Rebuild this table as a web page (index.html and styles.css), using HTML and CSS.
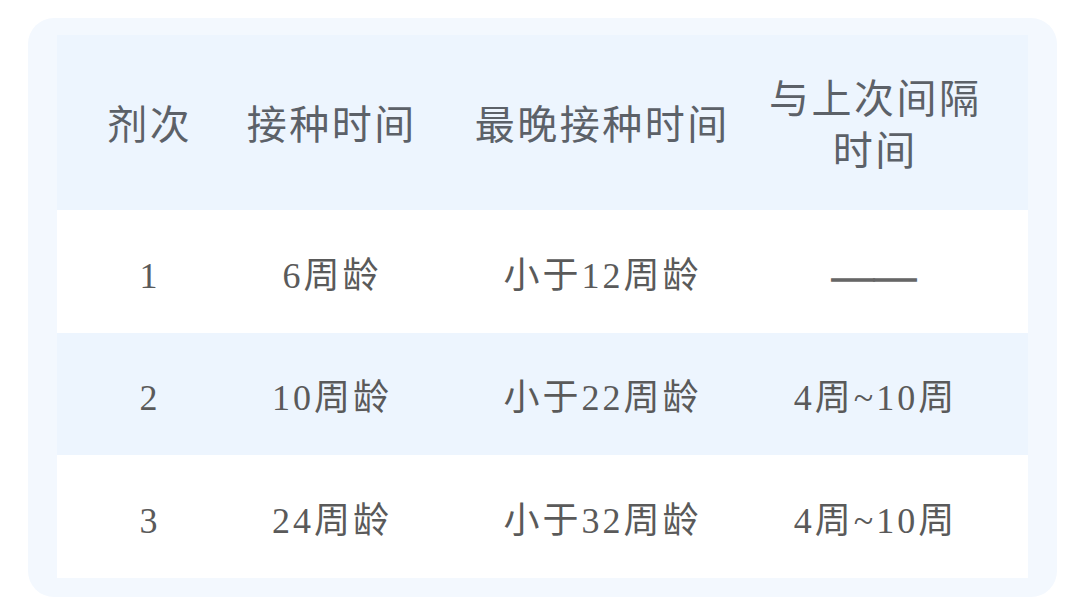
FILE: index.html
```html
<!DOCTYPE html>
<html lang="zh-CN">
<head>
<meta charset="utf-8">
<title>接种时间表</title>
<link rel="stylesheet" href="styles.css">
</head>
<body>
<div class="card">
  <div class="table">
    <div class="row head">
      <div class="cell"><span>剂次</span></div>
      <div class="cell"><span>接种时间</span></div>
      <div class="cell"><span>最晚接种时间</span></div>
      <div class="cell"><span class="two">与上次间隔<br>时间</span></div>
    </div>
    <div class="row white">
      <div class="cell"><span>1</span></div>
      <div class="cell"><span>6周龄</span></div>
      <div class="cell"><span>小于12周龄</span></div>
      <div class="cell"><span class="dash">——</span></div>
    </div>
    <div class="row blue">
      <div class="cell"><span>2</span></div>
      <div class="cell"><span>10周龄</span></div>
      <div class="cell"><span>小于22周龄</span></div>
      <div class="cell"><span>4周~10周</span></div>
    </div>
    <div class="row white">
      <div class="cell"><span>3</span></div>
      <div class="cell"><span>24周龄</span></div>
      <div class="cell"><span>小于32周龄</span></div>
      <div class="cell"><span>4周~10周</span></div>
    </div>
  </div>
</div>
</body>
</html>
```
FILE: styles.css
```css
html, body {
  margin: 0;
  padding: 0;
  background: #ffffff;
}

body {
  padding: 18px 0 0 28px;
  font-family: "Liberation Serif", "Noto Sans CJK SC", serif;
}

.card {
  width: 1029px;
  height: 579px;
  box-sizing: border-box;
  padding: 17px 29px 19px 29px;
  background: #f3f8fe;
  border-radius: 26px;
}

.table {
  display: grid;
  grid-template-rows: 175px 123px 122px 123px;
  background: #edf5fe;
  padding-right: 61px;
}

.row {
  display: grid;
  grid-template-columns: 183px 181px 360px 1fr;
}

.row.white {
  background: #ffffff;
  margin-right: -61px;
  padding-right: 61px;
}

.row.blue {
  background: #edf5fe;
}

.cell {
  display: flex;
  align-items: center;
  justify-content: center;
  min-width: 0;
}

.cell span {
  white-space: nowrap;
  text-align: center;
}

.head .cell span {
  font-size: 40px;
  letter-spacing: 2.5px;
  padding-left: 2.5px;
  color: #5c6168;
  line-height: 52px;
  padding-top: 6px;
}

.row.white .cell span,
.row.blue .cell span {
  font-size: 36px;
  letter-spacing: 3px;
  padding-left: 3px;
  color: #5a5a5a;
  line-height: 40px;
  padding-top: 8px;
}

.row .cell span.dash {
  font-size: 42px;
  letter-spacing: 0;
  padding-left: 0;
  color: #666666;
  -webkit-text-stroke: 1.4px #666666;
}
```
